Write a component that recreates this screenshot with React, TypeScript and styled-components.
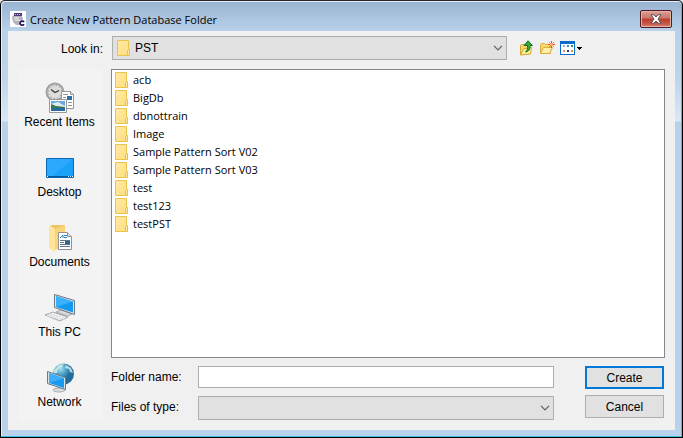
import React from "react";
import styled, { createGlobalStyle } from "styled-components";

const GlobalStyle = createGlobalStyle`
  *, *::before, *::after { box-sizing: border-box; }
  body { margin: 0; background: #e6e6e6; font: 12px/16px "Liberation Sans", Arial, sans-serif; color: #000; }
  button, input, select { font: inherit; color: inherit; margin: 0; border-radius: 0; }
  svg { display: block; flex: none; }
`;

const Window = styled.main`
  display: flex;
  flex-direction: column;
  min-height: 100vh;
  padding: 1px 7px 7px;
  border: 1px solid #000;
  border-top-color: #26262c;
  border-radius: 5px 5px 0 0;
  background: linear-gradient(#98b3d1, #b9d1ea 30px, #bdd4ec 75px, #dae7f5 120px, #b9d1ea 121px);
  box-shadow: inset -1px -1px 0 #35c3e0, inset 1px 1px 0 #e4eef8;
`;

const TitleBar = styled.header`
  display: flex;
  align-items: center;
  height: 29px;
  padding: 5px 3px 0 2px;
  gap: 4px;
`;

const Title = styled.h1`
  flex: 1;
  margin: 0;
  padding-top: 1px;
  font: 400 11px/16px "Open Sans", "Noto Sans", sans-serif;
`;

const CloseButton = styled.button`
  display: grid;
  place-items: center;
  width: 32px;
  height: 18px;
  padding: 0;
  border: 1px solid #4c1a20;
  border-radius: 2px;
  background: linear-gradient(#dba096, #ca7467 45%, #b83c2b 50%, #c4523f 75%, #d3806c);
  box-shadow: inset 0 0 0 1px #e5b5ab;
`;

const Content = styled.div`
  flex: 1;
  display: grid;
  grid-template-columns: 85px minmax(0, 1fr);
  grid-template-rows: 24px minmax(0, 1fr);
  gap: 9px 8px;
  padding: 5px 10px 10px;
  background: #f0f0f0;
`;

const LookLabel = styled.label`
  align-self: center;
  padding-top: 1px;
  text-align: right;
`;

const LookRow = styled.div`
  display: flex;
  gap: 12px;
  padding-left: 1px;
`;

const SelectBox = styled.div`
  flex: 1;
  display: grid;
  grid-template-columns: 19px minmax(0, 1fr) 14px;
  align-items: center;
  height: 24px;
`;

const Select = styled.select<{ $icon?: boolean }>`
  grid-area: 1 / 1 / 2 / 4;
  width: 100%;
  height: 100%;
  padding: 0 20px 0 ${(p) => (p.$icon ? 22 : 4)}px;
  border: 1px solid #adadad;
  background: #e1e1e1;
  appearance: none;
`;

const SelectIcon = styled.span<{ $end?: boolean }>`
  grid-row: 1;
  grid-column: ${(p) => (p.$end ? 3 : 1)};
  z-index: 1;
  justify-self: ${(p) => (p.$end ? "start" : "end")};
  pointer-events: none;
`;

const Tools = styled.div`
  display: flex;
  align-items: center;
  gap: 4px;
  width: 146px;
`;

const ToolButton = styled.button`
  display: flex;
  padding: 0;
  border: 0;
  background: none;
`;

const Places = styled.nav`
  display: flex;
  flex-direction: column;
  background: #f3f3f3;
`;

const Place = styled.button`
  display: flex;
  flex-direction: column;
  align-items: center;
  height: 70px;
  padding: 13px 2px 0 0;
  border: 0;
  background: none;
  line-height: 16px;
  white-space: nowrap;
`;

const Main = styled.div`
  display: flex;
  flex-direction: column;
  gap: 8px;
`;

const FileList = styled.ul`
  flex: 1;
  margin: 0;
  padding: 1px 3px;
  list-style: none;
  border: 1px solid #828790;
  background: #fff;
`;

const FileItem = styled.li`
  display: flex;
`;

const FileButton = styled.button`
  display: flex;
  align-items: center;
  gap: 4px;
  height: 18px;
  padding: 0;
  border: 0;
  background: none;
  font: 11px/16px "Open Sans", "Noto Sans", sans-serif;
`;

const Footer = styled.form`
  display: flex;
  gap: 31px;
  padding-right: 1px;
`;

const Fields = styled.div`
  flex: 1;
  display: grid;
  grid-template-columns: 87px minmax(0, 1fr);
  grid-template-rows: 22px 24px;
  row-gap: 8px;
`;

const FieldLabel = styled.label`
  padding-top: 3px;
`;

const TextInput = styled.input`
  width: 100%;
  padding: 0 4px;
  border: 1px solid #abadb3;
  background: #fff;
`;

const Actions = styled.div`
  display: flex;
  flex-direction: column;
  gap: 6px;
  width: 79px;
`;

const ActionButton = styled.button<{ $primary?: boolean }>`
  height: 23px;
  padding: 0;
  border: ${(p) => (p.$primary ? "2px solid #0078d7" : "1px solid #adadad")};
  background: #e1e1e1;
`;

const AppIcon = () => (
  <svg width="16" height="16" viewBox="0 0 16 16">
    <path fill="#fff" d="M0 0h16v16H0z" />
    <path fill="#b4b3bb" d="M2 6l2-2h7l2 3-1 4-3 3H6L3 11z" />
    <path fill="#d6d5da" d="M4 6h5v4H5z" />
    <path fill="#4a3a78" d="M4 2h8v3H4z" />
    <path stroke="#c6bfdc" d="M5 3.500h6" strokeDasharray="1 1" />
    <path fill="#fff" d="M9 9h6v6H9z" opacity=".7" />
    <path fill="none" stroke="#24145c" strokeWidth="1.800" d="M14 11c-1-1.500-4-1-4 1.200s3 2.600 4 1" />
  </svg>
);

const CloseIcon = () => (
  <svg width="12" height="10" viewBox="0 0 12 10">
    <path fill="#fff" stroke="#54515a" d="M1 .8h3L6 3 8 .8h3L8 5l3 4.200H8L6 7 4 9.200H1L4 5z" />
  </svg>
);

const FolderIcon = () => (
  <svg width="14" height="16" viewBox="0 0 14 16">
    <defs>
      <linearGradient id="folder" x2="1" y2="1">
        <stop stopColor="#ffe9a6" />
        <stop offset="1" stopColor="#fddd7e" />
      </linearGradient>
    </defs>
    <path fill="url(#folder)" stroke="#e8c44c" d="M.5.5h11v9h1v6H.5z" />
    <path fill="#ffe69a" stroke="#e8c44c" d="M10.500 15.500v-5l1-1h1v6z" />
  </svg>
);

const Chevron = () => (
  <svg width="10" height="6" viewBox="0 0 10 6">
    <path fill="none" stroke="#606060" strokeWidth="1.200" d="M1 .8l4 4 4-4" />
  </svg>
);

const UpIcon = () => (
  <svg width="16" height="16" viewBox="0 0 16 16">
    <path fill="#f5d768" stroke="#d4a62d" d="M1.500 14.500v-9l1-1h3l1 1h3v9z" />
    <path fill="#fff1a4" stroke="#d4a62d" d="M1.500 15l3-6 8-2-1 7z" />
    <path fill="#36a83b" stroke="#19721f" d="M9 .8l4.500 4.700H11c0 4-1 6-4.500 6.500 2-1.500 2-3.500 2-6.500H5z" />
  </svg>
);

const NewFolderIcon = () => (
  <svg width="17" height="16" viewBox="0 0 17 16">
    <path fill="#f8d96d" stroke="#d9ae42" d="M1.500 13.500v-9l1-1h3l1 1h5v9z" />
    <path fill="#fff0a9" stroke="#d9ae42" d="M1.500 13.500l3-6h9l-3 6z" />
    <path stroke="#f47b55" d="M10 2l5 5M15 2l-5 5" />
    <path stroke="#ef4c20" d="M12.500 1v7M9 4.500h7" />
    <circle cx="12.500" cy="4.500" r="1.500" fill="#ffae73" />
  </svg>
);

const ViewIcon = () => (
  <svg width="23" height="16" viewBox="0 0 23 16">
    <path fill="#0a6cce" d="M0 1h15v14H0z" />
    <path fill="#fff" d="M1 4h13v10H1z" />
    <path fill="#ababd3" d="M3 5h2v2H3z" />
    <path fill="#388bd4" d="M7 5h2v2H7z" />
    <path fill="#209a36" d="M11 5h2v2h-2z" />
    <path fill="#f18b68" d="M3 10h2v2H3z" />
    <path fill="#183a93" d="M7 10h2v2H7z" />
    <path fill="#d39b1f" d="M11 10h2v2h-2z" />
    <path fill="#000" d="M17 7h5v1h-1v1h-1v1h-1V9h-1V8h-1z" />
  </svg>
);

const RecentIcon = () => (
  <svg width="32" height="32" viewBox="0 0 32 32">
    <circle cx="11" cy="10" r="8.500" fill="#deddda" stroke="#a1a1a1" strokeWidth="2" />
    <circle cx="11" cy="10" r="6.500" fill="none" stroke="#777" strokeDasharray="1 2.400" />
    <path fill="none" stroke="#303943" strokeWidth="1.300" d="M7 7.500l4 3 4-2" />
    <path fill="#fff" stroke="#999" d="M17.500 9.500h9l3 3v14h-12z" />
    <path fill="#ddd" stroke="#999" d="M26.500 9.500v3h3" />
    <path stroke="#929292" d="M19 12.500h5M19 15.500h3M19 18.500h3M24 20.500h4M24 23.500h4" />
    <path fill="#2d6da8" d="M23 14h5v4h-5z" />
    <path fill="#fff" stroke="#999" d="M5.500 17.500h17v13h-17z" />
    <path fill="#6daada" d="M7 19h14v10H7z" />
    <path fill="#d9edf3" d="M10 21l4-1 7 4v1H7v-3z" />
    <path fill="#39754e" d="M7 22l5 2 9 1v1H7z" />
    <path fill="#276da0" d="M7 26h14v3H7z" />
  </svg>
);

const DesktopIcon = () => (
  <svg width="32" height="32" viewBox="0 0 32 32">
    <path fill="#1ba1f8" stroke="#0868b6" d="M2.500 6.500h27v19h-27z" />
    <path fill="#38afff" d="M3 7h25L9 24H3z" opacity=".6" />
    <path fill="#075896" d="M3 24h26v1H3z" />
    <path stroke="#e2f5ff" d="M3 24.500h1M24 24.500h1M26 24.500h1M28 24.500h1" />
  </svg>
);

const DocumentsIcon = () => (
  <svg width="32" height="32" viewBox="0 0 32 32">
    <path fill="#edc663" d="M7 3h14v24H7z" />
    <path fill="#ffe49a" d="M5 3l6 4v23l-6-4z" />
    <path fill="#f7d477" d="M11 7l10-4v22l-10 3z" />
    <path fill="#fff" stroke="#929292" d="M14.500 10.500h9l4 4v13h-13z" />
    <path fill="#ddd" stroke="#929292" d="M23.500 10.500v4h4" />
    <path fill="none" stroke="#2d82be" d="M16 16l3-3v3M20 13.500h3M20 15.500h3" />
    <path stroke="#60778a" d="M16 18.500h10M16 20.500h4M16 22.500h10M16 24.500h10" />
    <path fill="#2d6894" d="M21 19h5v3h-5z" />
  </svg>
);

const PcIcon = () => (
  <svg width="32" height="32" viewBox="0 0 32 32">
    <path fill="#bcc2c6" d="M15 18l5 2 1 5-6-2z" />
    <path fill="#d8dcdf" stroke="#a7adb2" d="M12 20l5-2 11 4-4 2z" />
    <path fill="#e0e4e6" stroke="#6a7984" d="M10.500 2.500l20 6v14l-20-7z" />
    <path fill="#1598ef" d="M12 4l17 5.500v11L12 15z" />
    <path fill="#50bfff" d="M12 4l17 5.500L12 15z" opacity=".65" />
    <path fill="#d9dcde" stroke="#a5a9ac" d="M1 23l8-3 15 5-8 4z" />
    <path stroke="#fff" strokeDasharray="2 1" d="M5 22l15 5M8 21l14 5M3 23.500l13 4" />
  </svg>
);

const NetworkIcon = () => (
  <svg width="32" height="32" viewBox="0 0 32 32">
    <defs>
      <radialGradient id="globe" cx=".35" cy=".25">
        <stop stopColor="#a7e1ef" />
        <stop offset=".55" stopColor="#4fa3c7" />
        <stop offset="1" stopColor="#236d9b" />
      </radialGradient>
    </defs>
    <circle cx="19.500" cy="12" r="10.500" fill="url(#globe)" />
    <path fill="#d3f0ee" opacity=".8" d="M10 8l5-5 5-1-2 3-4 2-1 4-4 1zM22 3l5 3 2 5-3-1-1-3-4-1z" />
    <path fill="#bac3c9" d="M13 23l5 1v4l-5-1z" />
    <ellipse cx="15" cy="28" rx="6" ry="2" fill="#d8dddf" stroke="#a7afb4" />
    <path fill="#dce2e6" stroke="#607d8d" d="M3.500 9.500l18 6v12l-18-6z" />
    <path fill="#199aef" d="M5 11l15 5v10L5 21z" />
    <path fill="#52bfff" opacity=".6" d="M5 11l15 5-15 5z" />
  </svg>
);

const places = [
  { name: "Recent Items", Icon: RecentIcon },
  { name: "Desktop", Icon: DesktopIcon },
  { name: "Documents", Icon: DocumentsIcon },
  { name: "This PC", Icon: PcIcon },
  { name: "Network", Icon: NetworkIcon },
];

const folders = ["acb", "BigDb", "dbnottrain", "Image", "Sample Pattern Sort V02", "Sample Pattern Sort V03", "test", "test123", "testPST"];

export default function App() {
  return (
    <>
      <GlobalStyle />
      <Window>
        <TitleBar>
          <AppIcon />
          <Title>Create New Pattern Database Folder</Title>
          <CloseButton aria-label="Close"><CloseIcon /></CloseButton>
        </TitleBar>
        <Content>
          <LookLabel htmlFor="look-in">Look in:</LookLabel>
          <LookRow>
            <SelectBox>
              <Select id="look-in" $icon><option>PST</option></Select>
              <SelectIcon><FolderIcon /></SelectIcon>
              <SelectIcon $end><Chevron /></SelectIcon>
            </SelectBox>
            <Tools>
              <ToolButton aria-label="Up one level"><UpIcon /></ToolButton>
              <ToolButton aria-label="Create new folder"><NewFolderIcon /></ToolButton>
              <ToolButton aria-label="View menu"><ViewIcon /></ToolButton>
            </Tools>
          </LookRow>
          <Places aria-label="Places">
            {places.map(({ name, Icon }) => (
              <Place key={name}><Icon />{name}</Place>
            ))}
          </Places>
          <Main>
            <FileList>
              {folders.map((name) => (
                <FileItem key={name}><FileButton><FolderIcon />{name}</FileButton></FileItem>
              ))}
            </FileList>
            <Footer onSubmit={(e) => e.preventDefault()}>
              <Fields>
                <FieldLabel htmlFor="folder-name">Folder name:</FieldLabel>
                <TextInput id="folder-name" type="text" />
                <FieldLabel htmlFor="file-type">Files of type:</FieldLabel>
                <SelectBox>
                  <Select id="file-type"><option aria-label="Any type"></option></Select>
                  <SelectIcon $end><Chevron /></SelectIcon>
                </SelectBox>
              </Fields>
              <Actions>
                <ActionButton type="submit" $primary>Create</ActionButton>
                <ActionButton type="button">Cancel</ActionButton>
              </Actions>
            </Footer>
          </Main>
        </Content>
      </Window>
    </>
  );
}
